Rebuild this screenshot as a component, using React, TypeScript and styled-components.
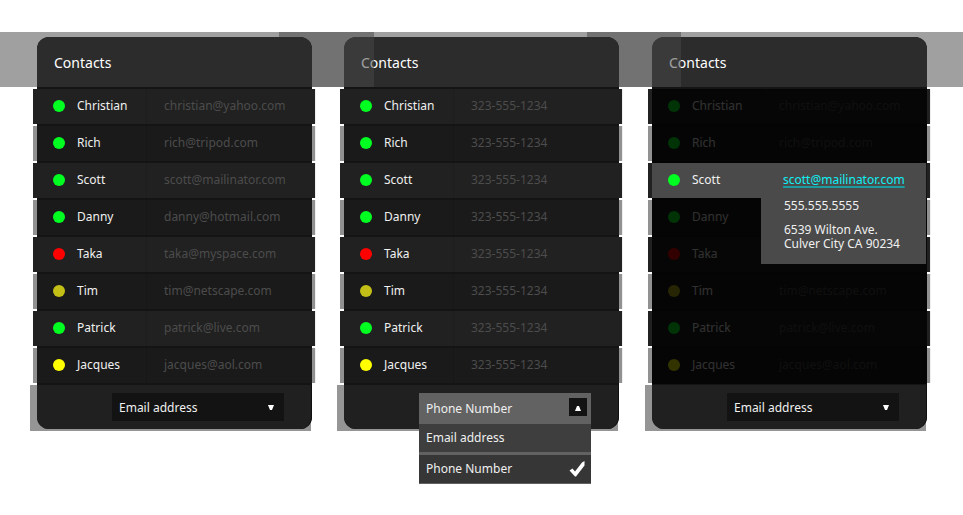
import React, { useState } from "react";
import styled, { createGlobalStyle } from "styled-components";

const GlobalStyle = createGlobalStyle`
  * { box-sizing: border-box; }
  body {
    margin: 0;
    background: #fff;
    color: #f0f0f0;
    font-family: "Noto Sans", "Open Sans", sans-serif;
    font-size: 12px;
    line-height: 16px;
    overflow-x: hidden;
  }
  button, select { font: inherit; color: inherit; }
`;

const Page = styled.main`
  display: grid;
  grid-template-columns: minmax(0, 1fr) 32px minmax(0, 1fr) 33px minmax(0, 1fr);
  align-items: start;
  padding: 37px 36px 84px 37px;
  overflow: hidden;
`;

const Panel = styled.section<{ $column: number; $layer: number }>`
  grid-column: ${(p) => p.$column};
  position: relative;
  z-index: ${(p) => p.$layer};
`;

const HeaderBand = styled.div`
  position: absolute;
  z-index: -1;
  top: -5px;
  left: -65px;
  right: -62px;
  height: 55px;
  background: rgba(71, 71, 71, 0.516);
`;

const FooterBand = styled.div`
  position: absolute;
  z-index: -1;
  left: -7px;
  right: 1px;
  bottom: -2px;
  height: 46px;
  background: #959595;
`;

const Shell = styled.div`
  border-radius: 12px;
  background: #141414;
`;

const Header = styled.header`
  display: flex;
  align-items: center;
  height: 50px;
  padding: 2px 17px 0;
  border-radius: 12px 12px 0 0;
  background: #2c2c2c;
`;

const Title = styled.h2`
  margin: 0;
  font-size: 14px;
  line-height: 20px;
  font-weight: 400;
  color: #fff;
`;

const ListArea = styled.div`
  position: relative;
  padding: 2px 0;
`;

const Shade = styled.div`
  position: absolute;
  z-index: 1;
  inset: 2px 0 1px;
  background: rgba(0, 0, 0, 0.8);
`;

const Table = styled.table`
  display: block;
`;

const Body = styled.tbody`
  display: grid;
  gap: 2px;
`;

const Row = styled.tr<{ $active: boolean }>`
  display: grid;
  grid-template-columns: 110px minmax(0, 1fr);
  height: 35px;
  margin: 0 -3px 0 -4px;
  padding: 0 3px 0 4px;
  background: #212121;
  box-shadow: 1px 0 #eee;
  --cell: ${(p) => (p.$active ? "#4a4a4a" : "#212121")};
  --rule: ${(p) => (p.$active ? "#4a4a4a" : "#1d1d1d")};
  --edge: ${(p) => (p.$active ? "#141414" : "#212121")};
  ${(p) => p.$active && "position: relative; z-index: 2;"}

  &:nth-child(even) {
    background: #919191;
    --cell: #1a1a1a;
    --rule: #171717;
    --edge: #1a1a1a;
  }
`;

const NameCell = styled.th`
  display: flex;
  align-items: center;
  gap: 12px;
  padding: 0 0 1px 16px;
  border-right: 1px solid var(--rule);
  background: var(--cell);
  font-weight: 400;
  text-align: left;
`;

const Dot = styled.span<{ $color: string }>`
  flex: none;
  width: 12px;
  height: 12px;
  border-radius: 50%;
  background: ${(p) => p.$color};
`;

const ContactCell = styled.td`
  position: relative;
  display: flex;
  align-items: center;
  padding: 0 0 1px 17px;
  border-right: 1px solid var(--edge);
  background: var(--cell);
  color: #4c4c4c;
  white-space: nowrap;
`;

const MailLink = styled.a`
  margin-left: 4px;
  color: #0ff0f4;
  text-decoration: underline;
  text-decoration-color: #1c9c9e;
  text-decoration-thickness: 2px;
  text-underline-offset: 2px;
`;

const Details = styled.address`
  position: absolute;
  top: 35px;
  left: -1px;
  right: 0;
  display: grid;
  gap: 10px;
  padding: 1px 0 13px 23px;
  background: #4a4a4a;
  color: #f0f0f0;
  font-style: normal;
  line-height: 14px;
`;

const Footer = styled.footer`
  display: flex;
  justify-content: flex-end;
  height: 44px;
  padding: 8px 27px 8px 75px;
  border-right: 1px solid #101010;
  border-radius: 0 0 12px 12px;
  background: #202020;
`;

const Picker = styled.div`
  position: relative;
  width: 172px;
`;

const Select = styled.select`
  appearance: none;
  display: block;
  width: 100%;
  height: 28px;
  padding: 2px 24px 0 7px;
  border: 0;
  border-radius: 0;
  background: #131313;
`;

const SelectArrow = styled.svg`
  position: absolute;
  top: 12px;
  right: 10px;
  pointer-events: none;
`;

const OpenButton = styled.button`
  display: flex;
  align-items: center;
  justify-content: space-between;
  width: 100%;
  height: 31px;
  padding: 0 4px 0 7px;
  border: 0;
  background: #626262;
  text-align: left;
`;

const ArrowBox = styled.span`
  display: grid;
  place-items: center;
  width: 18px;
  height: 18px;
  margin-bottom: 3px;
  padding-top: 2px;
  background: #131313;
`;

const Menu = styled.ul`
  position: absolute;
  top: 31px;
  left: 0;
  right: 0;
  display: grid;
  gap: 3px;
  margin: 0;
  padding: 0 0 1px;
  background: #626262;
  list-style: none;
`;

const Option = styled.li<{ $selected: boolean }>`
  display: flex;
  align-items: center;
  justify-content: space-between;
  height: 28px;
  padding: 0 6px 0 7px;
  background: ${(p) => (p.$selected ? "#363636" : "#3e3e3e")};
  cursor: pointer;
`;

const GREEN = "#00ff21";

const contacts = [
  { name: "Christian", email: "christian@yahoo.com", status: "Online", color: GREEN },
  { name: "Rich", email: "rich@tripod.com", status: "Online", color: GREEN },
  { name: "Scott", email: "scott@mailinator.com", status: "Online", color: GREEN },
  { name: "Danny", email: "danny@hotmail.com", status: "Online", color: GREEN },
  { name: "Taka", email: "taka@myspace.com", status: "Busy", color: "#ff0000" },
  { name: "Tim", email: "tim@netscape.com", status: "Idle", color: "#c3bf17" },
  { name: "Patrick", email: "patrick@live.com", status: "Online", color: GREEN },
  { name: "Jacques", email: "jacques@aol.com", status: "Away", color: "#ffff00" },
];

const PHONE = "323-555-1234";
const fields = ["Email address", "Phone Number"];

/* Number of rows that the details card hangs over. */
const COVERED_ROWS = 2;

type PickerProps = { value: string; onChange: (v: string) => void };

function ClosedPicker({ value, onChange }: PickerProps) {
  return (
    <Picker>
      <Select aria-label="Displayed field" value={value} onChange={(e) => onChange(e.target.value)}>
        {fields.map((f) => (
          <option key={f}>{f}</option>
        ))}
      </Select>
      <SelectArrow width="6" height="5" viewBox="0 0 6 5" aria-hidden="true">
        <path d="M0 0h6L4 5H2z" fill="#fff" />
      </SelectArrow>
    </Picker>
  );
}

function OpenPicker({ value, onChange }: PickerProps) {
  return (
    <Picker>
      <OpenButton type="button" aria-haspopup="listbox" aria-expanded="true">
        {value}
        <ArrowBox>
          <svg width="6" height="5" viewBox="0 0 6 5" aria-hidden="true">
            <path d="M0 5h6L4 0H2z" fill="#fff" />
          </svg>
        </ArrowBox>
      </OpenButton>
      <Menu role="listbox" aria-label="Displayed field">
        {fields.map((f) => (
          <Option
            key={f}
            role="option"
            aria-selected={f === value}
            $selected={f === value}
            onClick={() => onChange(f)}
          >
            {f}
            {f === value && (
              <svg width="16" height="16" viewBox="0 0 16 16" aria-hidden="true">
                <path d="M.5 9.500 3.500 7.500 6 10.500 13 1.500 15.500 0V4.500L7 15.500H6z" fill="#fff" />
              </svg>
            )}
          </Option>
        ))}
      </Menu>
    </Picker>
  );
}

type PanelProps = {
  column: number;
  layer: number;
  initial: string;
  open?: boolean;
  active?: string;
};

function ContactsPanel({ column, layer, initial, open = false, active }: PanelProps) {
  const [field, setField] = useState(initial);
  const activeIndex = contacts.findIndex((c) => c.name === active);
  const isCovered = (i: number) =>
    activeIndex >= 0 && i > activeIndex && i <= activeIndex + COVERED_ROWS;

  return (
    <Panel $column={column} $layer={layer}>
      <HeaderBand />
      <FooterBand />
      <Shell>
        <Header>
          <Title>Contacts</Title>
        </Header>
        <ListArea>
          <Table aria-label="Contacts">
            <Body>
              {contacts.map((c, i) => (
                <Row key={c.name} $active={i === activeIndex}>
                  <NameCell scope="row">
                    <Dot $color={c.color} role="img" aria-label={c.status} />
                    {c.name}
                  </NameCell>
                  <ContactCell>
                    {i === activeIndex ? (
                      <>
                        <MailLink href={`mailto:${c.email}`}>{c.email}</MailLink>
                        <Details>
                          <span>555.555.5555</span>
                          <span>
                            6539 Wilton Ave.
                            <br />
                            Culver City CA 90234
                          </span>
                        </Details>
                      </>
                    ) : isCovered(i) ? null : field === "Phone Number" ? (
                      PHONE
                    ) : (
                      c.email
                    )}
                  </ContactCell>
                </Row>
              ))}
            </Body>
          </Table>
          {active && <Shade />}
        </ListArea>
        <Footer>
          {open ? (
            <OpenPicker value={field} onChange={setField} />
          ) : (
            <ClosedPicker value={field} onChange={setField} />
          )}
        </Footer>
      </Shell>
    </Panel>
  );
}

export default function App() {
  return (
    <>
      <GlobalStyle />
      <Page>
        <ContactsPanel column={1} layer={3} initial="Email address" />
        <ContactsPanel column={3} layer={2} initial="Phone Number" open />
        <ContactsPanel column={5} layer={1} initial="Email address" active="Scott" />
      </Page>
    </>
  );
}
